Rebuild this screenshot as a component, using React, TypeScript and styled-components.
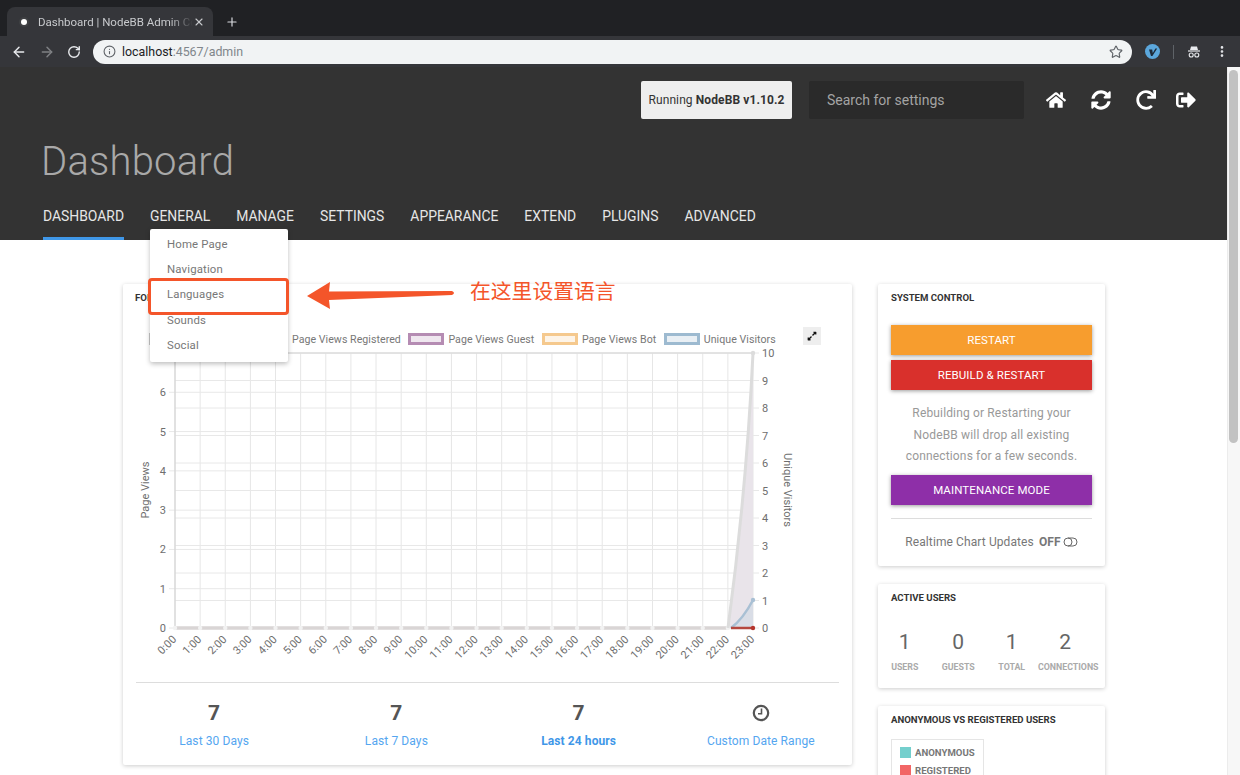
import React from 'react';
import styled, { createGlobalStyle } from 'styled-components';
import { ArrowLeft, ArrowRight, Info, MoreVertical, Plus, RotateCw, Star, X } from 'lucide-react';
import { FaExpandAlt, FaHome, FaRedo, FaSignOutAlt, FaSyncAlt } from 'react-icons/fa';

const GlobalStyle = createGlobalStyle`
    html, body {
        margin: 0;
        height: 775px;
        overflow: hidden;
        background: #fff;
        font-family: Roboto, "Liberation Sans", sans-serif;
    }
`;

const Window = styled.div`
    position: relative;
    width: 1240px;
    height: 775px;
    overflow: hidden;
    display: flex;
    flex-direction: column;
`;

const TabStrip = styled.div`
    height: 36px;
    flex: none;
    background: #202124;
    display: flex;
    align-items: flex-end;
    padding-left: 7px;
    gap: 12px;
    color: #dadce0;
`;

const Tab = styled.div`
    width: 206px;
    height: 29px;
    box-sizing: border-box;
    background: #35363a;
    border-radius: 8px 8px 0 0;
    display: flex;
    align-items: center;
    padding: 0 8px 0 13px;
    font-size: 11.5px;
    color: #c8cacd;
`;

const Favicon = styled.span`
    width: 6px;
    height: 6px;
    border-radius: 50%;
    background: #fff;
    box-shadow: 0 0 0 2px #3f4043;
    margin-right: 11px;
    margin-left: 1px;
    flex: none;
`;

const TabTitle = styled.span`
    flex: 1;
    white-space: nowrap;
    overflow: hidden;
    -webkit-mask-image: linear-gradient(to right, #000 85%, transparent);
    mask-image: linear-gradient(to right, #000 85%, transparent);
`;

const NewTab = styled.div`
    height: 29px;
    display: flex;
    align-items: center;
`;

const Toolbar = styled.div`
    height: 31px;
    flex: none;
    box-sizing: border-box;
    background: #35363a;
    display: flex;
    align-items: center;
    padding: 0 11px;
    color: #e8eaed;
`;

const ToolButton = styled.div<{ $width: number; $dim?: boolean }>`
    width: ${p => p.$width}px;
    flex: none;
    display: flex;
    align-items: center;
    color: ${p => (p.$dim ? '#7f8184' : '#e8eaed')};
`;

const UrlBar = styled.div`
    width: 1039px;
    height: 24px;
    flex: none;
    margin-left: -2px;
    box-sizing: border-box;
    background: #f1f3f4;
    border-radius: 12px;
    display: flex;
    align-items: center;
    padding: 0 9px 0 10px;
    font-size: 12.4px;
    color: #202124;
`;

const UrlText = styled.span`
    margin-left: 6px;
    flex: 1;
`;

const UrlMuted = styled.span`
    color: #80868b;
`;

const ExtensionBadge = styled.div`
    width: 15px;
    height: 15px;
    border-radius: 50%;
    background: #5ba7dc;
    margin-left: 13px;
    display: flex;
    align-items: center;
    justify-content: center;
    flex: none;
`;

const ToolDivider = styled.div`
    width: 1px;
    height: 14px;
    background: #5f6368;
    margin: 0 13px 0 13px;
    flex: none;
`;

const Viewport = styled.div`
    flex: 1;
    min-height: 0;
    display: flex;
`;

const Page = styled.div`
    flex: 1;
    min-width: 0;
    overflow: hidden;
    background: #fff;
`;

const Scrollbar = styled.div`
    width: 13px;
    flex: none;
    box-sizing: border-box;
    background: #f7f7f7;
    border-left: 1px solid #ececec;
    padding: 3px 2px 0 1px;
`;

const ScrollThumb = styled.div`
    height: 373px;
    border-radius: 5px;
    background: #c2c2c2;
`;

const Header = styled.header`
    height: 173px;
    box-sizing: border-box;
    background: #333;
    display: flex;
    flex-direction: column;
`;

const HeaderTop = styled.div`
    display: flex;
    align-items: center;
    justify-content: flex-end;
    padding: 14px 30px 0 0;
`;

const VersionBox = styled.div`
    width: 151px;
    height: 38px;
    box-sizing: border-box;
    background: #eee;
    border-radius: 2px;
    display: flex;
    align-items: center;
    justify-content: center;
    font-size: 12px;
    letter-spacing: 0.1px;
    color: #333;
    white-space: pre;
    b { font-weight: 700; }
`;

const SearchBox = styled.div`
    width: 215px;
    height: 38px;
    box-sizing: border-box;
    margin-left: 17px;
    margin-right: 21px;
    background: #2a2a2a;
    border-radius: 2px;
    display: flex;
    align-items: center;
    padding-left: 18px;
    font-size: 14px;
    color: #a4a4a4;
`;

const HeaderIcon = styled.div<{ $width: number; $gap?: number }>`
    width: ${p => p.$width}px;
    margin-left: ${p => p.$gap ?? 0}px;
    flex: none;
    display: flex;
    justify-content: center;
    color: #fff;
    font-size: 20px;
`;

const Title = styled.h1`
    margin: 19px 0 0 41px;
    font-size: 40px;
    line-height: 48px;
    font-weight: 300;
    letter-spacing: 0.2px;
    color: #a9a9a9;
`;

const Nav = styled.nav`
    display: flex;
    gap: 26px;
    margin: auto 0 0 43px;
`;

const NavItem = styled.div<{ $active?: boolean }>`
    position: relative;
    height: 35px;
    box-sizing: border-box;
    padding-top: 3px;
    font-size: 13.9px;
    line-height: 17px;
    color: #e6e6e6;
    text-transform: uppercase;
    border-bottom: 3px solid ${p => (p.$active ? '#3f97e8' : 'transparent')};
`;

const Dropdown = styled.div`
    position: absolute;
    top: 24px;
    left: 0;
    width: 138px;
    height: 133px;
    box-sizing: border-box;
    padding: 3px 0;
    background: #fff;
    border-radius: 2px;
    box-shadow: 0 2px 5px rgba(0, 0, 0, 0.26);
    z-index: 3;
    text-transform: none;
`;

const DropdownItem = styled.div`
    height: 25.2px;
    line-height: 25px;
    padding-left: 17px;
    font-size: 11.4px;
    letter-spacing: 0.15px;
    color: #777;
`;

const Content = styled.main`
    display: flex;
    align-items: flex-start;
    gap: 26px;
    padding: 44px 0 0 123px;
`;

const Card = styled.section`
    background: #fff;
    border-radius: 2px;
    box-shadow: 0 1px 4px rgba(0, 0, 0, 0.2);
`;

const TrafficCard = styled(Card)`
    width: 729px;
    height: 481px;
    flex: none;
    box-sizing: border-box;
    position: relative;
`;

const CardTitle = styled.h3`
    margin: 0;
    font-size: 9.6px;
    line-height: 12px;
    font-weight: 700;
    color: #333;
    text-transform: uppercase;
`;

const TrafficHead = styled.div`
    padding: 8px 12px 0;
`;

const LegendRow = styled.div`
    display: flex;
    align-items: center;
    height: 18px;
    margin-top: 26px;
    padding-left: 26px;
`;

const LegendItem = styled.div`
    display: flex;
    align-items: center;
    gap: 4px;
    margin-right: 7.5px;
    font-size: 10.6px;
    letter-spacing: 0.05px;
    color: #777;
    white-space: nowrap;
`;

const LegendSwatch = styled.span<{ $border: string; $fill: string }>`
    width: 36px;
    height: 12px;
    box-sizing: border-box;
    border: 3px solid ${p => p.$border};
    background: ${p => p.$fill};
`;

const ExpandButton = styled.div`
    width: 18px;
    height: 18px;
    margin: -6px 0 0 20px;
    background: #eee;
    display: flex;
    align-items: center;
    justify-content: center;
    font-size: 10px;
    color: #111;
`;

const ChartSvg = styled.svg`
    display: block;
    width: 703px;
    height: 326px;
    margin: -2px 0 0 13px;
`;

const StatsRule = styled.div`
    height: 1px;
    background: #ddd;
    margin: 10px 13px 0;
`;

const StatsRow = styled.div`
    display: grid;
    grid-template-columns: repeat(4, 1fr);
`;

const StatCell = styled.div`
    display: flex;
    flex-direction: column;
    align-items: center;
`;

const StatValue = styled.div`
    height: 24px;
    margin-top: 18px;
    font-size: 21px;
    line-height: 24px;
    font-weight: 700;
    color: #555;
    display: flex;
    align-items: center;
`;

const StatLink = styled.div<{ $active?: boolean }>`
    margin-top: 9px;
    font-size: 12px;
    line-height: 15px;
    letter-spacing: 0.1px;
    font-weight: ${p => (p.$active ? 700 : 400)};
    color: ${p => (p.$active ? '#3f97e8' : '#55a6f0')};
`;

const SideColumn = styled.div`
    width: 227px;
    flex: none;
    display: flex;
    flex-direction: column;
    gap: 18px;
`;

const SystemCard = styled(Card)`
    height: 282px;
    box-sizing: border-box;
    padding: 8px 13px 0;
`;

const ActionButton = styled.div<{ $bg: string; $top: number }>`
    height: 30px;
    margin-top: ${p => p.$top}px;
    background: ${p => p.$bg};
    color: #fff;
    font-size: 11.5px;
    line-height: 30px;
    letter-spacing: 0.1px;
    text-align: center;
    text-transform: uppercase;
    box-shadow: 0 1px 4px rgba(0, 0, 0, 0.4);
`;

const SystemNote = styled.p`
    margin: 12px 0 7px;
    padding-top: 1px;
    font-size: 12px;
    line-height: 21.5px;
    letter-spacing: 0.15px;
    color: #999;
    text-align: center;
`;

const SideRule = styled.div`
    height: 1px;
    background: #ddd;
    margin-top: 13px;
`;

const RealtimeRow = styled.div`
    margin-top: 15px;
    display: flex;
    justify-content: center;
    align-items: center;
    gap: 2px;
    font-size: 12px;
    line-height: 16px;
    letter-spacing: 0.1px;
    color: #777;
    white-space: pre;
    b { font-weight: 700; }
`;

const ActiveCard = styled(Card)`
    height: 104px;
    box-sizing: border-box;
    padding: 8px 0 0 13px;
`;

const ActiveLabel = styled.div`
    margin-top: 6px;
    font-size: 8.8px;
    line-height: 12px;
    font-weight: 700;
    color: #aaa;
    text-transform: uppercase;
    white-space: nowrap;
`;

const ActiveGrid = styled.div`
    display: grid;
    grid-template-columns: repeat(4, 53.5px);
    margin-top: 25px;
    margin-left: -13px;
`;

const ActiveCell = styled.div`
    display: flex;
    flex-direction: column;
    align-items: center;
    text-align: center;
    &:last-child ${ActiveLabel} {
        margin-left: 6px;
    }
`;

const ActiveNumber = styled.div`
    font-size: 21px;
    line-height: 26px;
    font-weight: 400;
    color: #666;
`;

const UsersCard = styled(Card)`
    height: 90px;
    box-sizing: border-box;
    padding: 8px 13px 0;
`;

const PieLegend = styled.div`
    width: 93px;
    box-sizing: border-box;
    margin-top: 13px;
    padding: 3px 8px;
    border: 1px solid #e5e5e5;
`;

const PieLegendItem = styled.div`
    display: flex;
    align-items: center;
    gap: 4px;
    height: 18px;
    font-size: 9.6px;
    font-weight: 700;
    color: #777;
    text-transform: uppercase;
`;

const PieSwatch = styled.span<{ $color: string }>`
    width: 11px;
    height: 11px;
    background: ${p => p.$color};
`;

const CalloutBox = styled.div`
    position: absolute;
    left: 148px;
    top: 278px;
    width: 141px;
    height: 37px;
    box-sizing: border-box;
    border: 3px solid #f4552a;
    border-radius: 4px;
    z-index: 4;
`;

const CalloutArrow = styled.svg`
    position: absolute;
    left: 300px;
    top: 275px;
    z-index: 4;
`;

const CalloutText = styled.div`
    position: absolute;
    left: 470px;
    top: 276px;
    font-family: "Noto Sans CJK SC", sans-serif;
    font-size: 20.8px;
    line-height: 28px;
    color: #f4552a;
    z-index: 4;
`;

const navItems = ['Dashboard', 'General', 'Manage', 'Settings', 'Appearance', 'Extend', 'Plugins', 'Advanced'];
const generalMenu = ['Home Page', 'Navigation', 'Languages', 'Sounds', 'Social'];

const legend = [
    { label: 'Page Views', border: '#c8c8c8', fill: '#f2f2f2' },
    { label: 'Page Views Registered', border: '#c98d8d', fill: '#f6ecec' },
    { label: 'Page Views Guest', border: '#b58cb3', fill: '#efe7ef' },
    { label: 'Page Views Bot', border: '#f5c98e', fill: '#fdf4e8' },
    { label: 'Unique Visitors', border: '#9dbad0', fill: '#e9eff4' },
];

const plotLeft = 175;
const plotRight = 753;
const plotTop = 353;
const plotBottom = 628;
const hourStep = (plotRight - plotLeft) / 23;
const hours = Array.from({ length: 24 }, (_, i) => i);
const leftTicks = [0, 1, 2, 3, 4, 5, 6, 7];
const rightTicks = [0, 1, 2, 3, 4, 5, 6, 7, 8, 9, 10];
const leftY = (v: number) => plotBottom - (v * (plotBottom - plotTop)) / 7;
const rightY = (v: number) => plotBottom - (v * (plotBottom - plotTop)) / 10;
const hourX = (h: number) => plotLeft + h * hourStep;

const tickText = { fontSize: 11, fill: '#6e6e6e', fontFamily: 'Roboto, sans-serif' };

const TrafficChart: React.FC = () => (
    <ChartSvg viewBox="136 346 703 326">
        {hours.map(h => (
            <line key={h} x1={hourX(h)} x2={hourX(h)} y1={plotTop} y2={plotBottom} stroke="#e6e6e6" />
        ))}
        {leftTicks.map(v => (
            <line key={v} x1={plotLeft - 6} x2={plotRight} y1={leftY(v)} y2={leftY(v)} stroke="#e8e8e8" />
        ))}
        {rightTicks.map(v => (
            <line key={v} x1={plotLeft} x2={plotRight + 6} y1={rightY(v)} y2={rightY(v)} stroke="#e8e8e8" />
        ))}
        <line x1={plotLeft} x2={plotLeft} y1={plotTop} y2={plotBottom} stroke="#cfcfcf" />
        <line x1={plotLeft} x2={plotRight} y1={plotTop} y2={plotTop} stroke="#d8d8d8" />

        <path d="M728 628 Q746.5 490 753 353 L753 628 Z" fill="#e9e4ea" />
        <path d="M731 628 Q743 619 753 600 L753 628 Z" fill="#d9dde6" />
        <line x1={plotLeft} x2={728} y1={plotBottom} y2={plotBottom} stroke="#d9d5d5" strokeWidth="3.5" />
        {hours.slice(0, 23).map(h => (
            <circle key={h} cx={hourX(h)} cy={plotBottom} r="2.2" fill="#f2f2f2" />
        ))}
        <path d="M728 628 Q746.5 490 753 353" fill="none" stroke="#dcdcdc" strokeWidth="3" />
        <path d="M731 628 Q743 619 753 600" fill="none" stroke="#a9c0d4" strokeWidth="2.5" />
        <circle cx={753} cy={600} r="2.2" fill="#a9c0d4" />
        <circle cx={753} cy={plotTop} r="2.2" fill="#dcdcdc" />
        <line x1={731} x2={753} y1={plotBottom} y2={plotBottom} stroke="#b5483f" strokeWidth="2.5" />
        <circle cx={753} cy={plotBottom} r="2.2" fill="#b5352d" />

        {leftTicks.map(v => (
            <text key={v} x={166} y={leftY(v) + 4} textAnchor="end" {...tickText}>
                {v}
            </text>
        ))}
        {rightTicks.map(v => (
            <text key={v} x={762} y={rightY(v) + 4} {...tickText}>
                {v}
            </text>
        ))}
        {hours.map(h => (
            <text
                key={h}
                x={hourX(h) + 2}
                y={640}
                textAnchor="end"
                transform={`rotate(-45 ${hourX(h) + 2} 640)`}
                {...tickText}
            >
                {h}:00
            </text>
        ))}
        <text x={149} y={490} textAnchor="middle" transform="rotate(-90 149 490)" {...tickText}>
            Page Views
        </text>
        <text x={784} y={490} textAnchor="middle" transform="rotate(90 784 490)" {...tickText}>
            Unique Visitors
        </text>
    </ChartSvg>
);

const App: React.FC = () => {
    return (
        <Window>
            <GlobalStyle />
            <TabStrip>
                <Tab>
                    <Favicon />
                    <TabTitle>Dashboard | NodeBB Admin Control Panel</TabTitle>
                    <X size={12} strokeWidth={2.2} />
                </Tab>
                <NewTab>
                    <Plus size={14} strokeWidth={2} />
                </NewTab>
            </TabStrip>
            <Toolbar>
                <ToolButton $width={28}>
                    <ArrowLeft size={16} strokeWidth={2.2} />
                </ToolButton>
                <ToolButton $width={28} $dim>
                    <ArrowRight size={16} strokeWidth={2.2} />
                </ToolButton>
                <ToolButton $width={28}>
                    <RotateCw size={14} strokeWidth={2.4} />
                </ToolButton>
                <UrlBar>
                    <Info size={13} color="#5f6368" strokeWidth={2} />
                    <UrlText>
                        localhost<UrlMuted>:4567/admin</UrlMuted>
                    </UrlText>
                    <Star size={14} color="#5f6368" strokeWidth={2} />
                </UrlBar>
                <ExtensionBadge>
                    <svg width="10" height="10" viewBox="0 0 10 10">
                        <path d="M1 2.5 L4.2 2.5 L4.8 6 L7.4 1.5 L9.2 1.5 L4.4 9 L3 9 Z" fill="#1d2b3a" />
                    </svg>
                </ExtensionBadge>
                <ToolDivider />
                <ToolButton $width={28}>
                    <svg width="14" height="14" viewBox="0 0 14 14" fill="none">
                        <path d="M4 1.5 H10 L11 5 H3 Z" fill="#e8eaed" />
                        <path d="M1 6 H13" stroke="#e8eaed" strokeWidth="1.2" />
                        <circle cx="4.2" cy="10" r="2" stroke="#e8eaed" strokeWidth="1.1" />
                        <circle cx="9.8" cy="10" r="2" stroke="#e8eaed" strokeWidth="1.1" />
                    </svg>
                </ToolButton>
                <MoreVertical size={15} strokeWidth={2.6} />
            </Toolbar>
            <Viewport>
                <Page>
                    <Header>
                        <HeaderTop>
                            <VersionBox>
                                Running <b>NodeBB v1.10.2</b>
                            </VersionBox>
                            <SearchBox>Search for settings</SearchBox>
                            <HeaderIcon $width={22}>
                                <FaHome />
                            </HeaderIcon>
                            <HeaderIcon $width={23} $gap={22}>
                                <FaSyncAlt />
                            </HeaderIcon>
                            <HeaderIcon $width={23} $gap={22}>
                                <FaRedo />
                            </HeaderIcon>
                            <HeaderIcon $width={23} $gap={17}>
                                <FaSignOutAlt />
                            </HeaderIcon>
                        </HeaderTop>
                        <Title>Dashboard</Title>
                        <Nav>
                            {navItems.map(item => (
                                <NavItem key={item} $active={item === 'Dashboard'}>
                                    {item}
                                    {item === 'General' && (
                                        <Dropdown>
                                            {generalMenu.map(entry => (
                                                <DropdownItem key={entry}>{entry}</DropdownItem>
                                            ))}
                                        </Dropdown>
                                    )}
                                </NavItem>
                            ))}
                        </Nav>
                    </Header>
                    <Content>
                        <TrafficCard>
                            <TrafficHead>
                                <CardTitle>Forum Traffic</CardTitle>
                            </TrafficHead>
                            <LegendRow>
                                {legend.map(l => (
                                    <LegendItem key={l.label}>
                                        <LegendSwatch $border={l.border} $fill={l.fill} />
                                        {l.label}
                                    </LegendItem>
                                ))}
                                <ExpandButton>
                                    <FaExpandAlt />
                                </ExpandButton>
                            </LegendRow>
                            <TrafficChart />
                            <StatsRule />
                            <StatsRow>
                                <StatCell>
                                    <StatValue>7</StatValue>
                                    <StatLink>Last 30 Days</StatLink>
                                </StatCell>
                                <StatCell>
                                    <StatValue>7</StatValue>
                                    <StatLink>Last 7 Days</StatLink>
                                </StatCell>
                                <StatCell>
                                    <StatValue>7</StatValue>
                                    <StatLink $active>Last 24 hours</StatLink>
                                </StatCell>
                                <StatCell>
                                    <StatValue>
                                        <svg width="18" height="18" viewBox="0 0 18 18" fill="none" stroke="#555">
                                            <circle cx="9" cy="9" r="7.2" strokeWidth="2.2" />
                                            <path d="M9.5 4.5 V9.8 H6" strokeWidth="1.6" />
                                        </svg>
                                    </StatValue>
                                    <StatLink>Custom Date Range</StatLink>
                                </StatCell>
                            </StatsRow>
                        </TrafficCard>
                        <SideColumn>
                            <SystemCard>
                                <CardTitle>System Control</CardTitle>
                                <ActionButton $bg="#f79d2e" $top={21}>Restart</ActionButton>
                                <ActionButton $bg="#d9302c" $top={5}>Rebuild &amp; Restart</ActionButton>
                                <SystemNote>
                                    Rebuilding or Restarting your
                                    <br />
                                    NodeBB will drop all existing
                                    <br />
                                    connections for a few seconds.
                                </SystemNote>
                                <ActionButton $bg="#8e2fa8" $top={0}>Maintenance Mode</ActionButton>
                                <SideRule />
                                <RealtimeRow>
                                    Realtime Chart Updates <b>OFF</b>
                                    <svg width="15" height="10" viewBox="0 0 15 10" fill="none" stroke="#666">
                                        <circle cx="5" cy="5" r="4" />
                                        <path d="M5 1 H10 A4 4 0 0 1 10 9 H5" />
                                    </svg>
                                </RealtimeRow>
                            </SystemCard>
                            <ActiveCard>
                                <CardTitle>Active Users</CardTitle>
                                <ActiveGrid>
                                    {[
                                        ['1', 'Users'],
                                        ['0', 'Guests'],
                                        ['1', 'Total'],
                                        ['2', 'Connections'],
                                    ].map(([count, label]) => (
                                        <ActiveCell key={label}>
                                            <ActiveNumber>{count}</ActiveNumber>
                                            <ActiveLabel>{label}</ActiveLabel>
                                        </ActiveCell>
                                    ))}
                                </ActiveGrid>
                            </ActiveCard>
                            <UsersCard>
                                <CardTitle>Anonymous vs Registered Users</CardTitle>
                                <PieLegend>
                                    <PieLegendItem>
                                        <PieSwatch $color="#74cfcd" />
                                        Anonymous
                                    </PieLegendItem>
                                    <PieLegendItem>
                                        <PieSwatch $color="#f26666" />
                                        Registered
                                    </PieLegendItem>
                                </PieLegend>
                            </UsersCard>
                        </SideColumn>
                    </Content>
                </Page>
                <Scrollbar>
                    <ScrollThumb />
                </Scrollbar>
            </Viewport>
            <CalloutBox />
            <CalloutArrow width="160" height="44" viewBox="300 275 160 44">
                <path d="M307 296 L330 282 L329 291.5 L452 291 Q456 293 452 295 L329 300 L330 309 Z" fill="#f4552a" />
            </CalloutArrow>
            <CalloutText>在这里设置语言</CalloutText>
        </Window>
    );
};

export default App;
